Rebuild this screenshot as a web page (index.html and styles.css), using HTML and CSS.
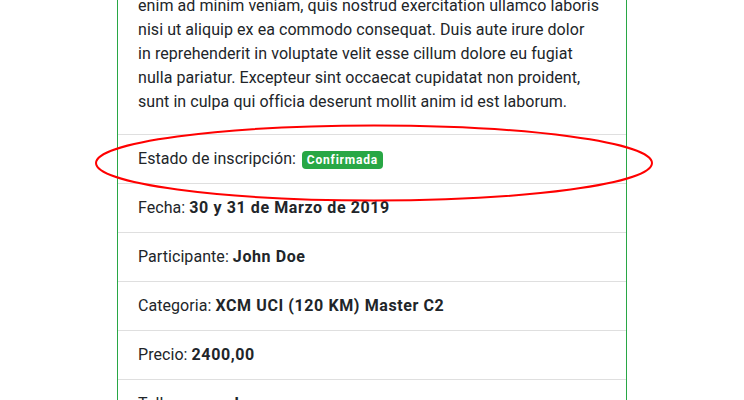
FILE: index.html
```html
<!DOCTYPE html>
<html lang="es">
<head>
<meta charset="utf-8">
<title>Inscripción</title>
<link rel="stylesheet" href="styles.css">
</head>
<body>
<div class="page">
  <div class="card">
    <div class="card-body">
      <p class="desc">enim ad minim veniam, quis nostrud exercitation ullamco laboris<br>nisi ut aliquip ex ea commodo consequat. Duis aute irure dolor<br>in reprehenderit in voluptate velit esse cillum dolore eu fugiat<br>nulla pariatur. Excepteur sint occaecat cupidatat non proident,<br>sunt in culpa qui officia deserunt mollit anim id est laborum.</p>
    </div>
    <ul class="list-group">
      <li class="list-item">Estado de inscripción: <span class="badge">Confirmada</span></li>
      <li class="list-item">Fecha: <b>30 y 31 de Marzo de 2019</b></li>
      <li class="list-item">Participante: <b>John Doe</b></li>
      <li class="list-item">Categoria: <b>XCM UCI (120 KM) Master C2</b></li>
      <li class="list-item">Precio: <b>2400,00</b></li>
      <li class="list-item">Talla remera: <b>L</b></li>
    </ul>
  </div>
  <svg class="highlight" width="560" height="78" viewBox="0 0 560 78" aria-hidden="true">
    <ellipse cx="280" cy="39" rx="278" ry="37.5" fill="none" stroke="#ff0000" stroke-width="2"/>
  </svg>
</div>
</body>
</html>
```

FILE: styles.css
```css
* { box-sizing: border-box; }
html, body { margin: 0; padding: 0; background: #fff; }
body {
  font-family: "Roboto", "Liberation Sans", sans-serif;
  font-size: 16px;
  line-height: 24px;
  color: #212529;
  letter-spacing: 0.06px;
  overflow: hidden;
}
.page {
  position: relative;
  width: 744px;
  height: 400px;
  overflow: hidden;
}
.card {
  width: 510px;
  margin: -27px auto 0;
  border: 1px solid #28a745;
  background: #fff;
}
.card-body { padding: 20px; }
.desc { margin: 0; white-space: nowrap; }
.list-group { list-style: none; margin: 0; padding: 0; }
.list-item {
  padding: 12px 20px;
  border-top: 1px solid rgba(0, 0, 0, 0.125);
  white-space: nowrap;
}
.list-item b { font-weight: 700; letter-spacing: 0.6px; }
.badge {
  display: inline-block;
  font-size: 12px;
  font-weight: 700;
  line-height: 1;
  padding: 3px 4.8px;
  margin-left: 2px;
  color: #fff;
  background: #28a745;
  border-radius: 4px;
  letter-spacing: 0.8px;
  vertical-align: baseline;
}
.highlight {
  position: absolute;
  left: 94px;
  top: 124px;
}
```
